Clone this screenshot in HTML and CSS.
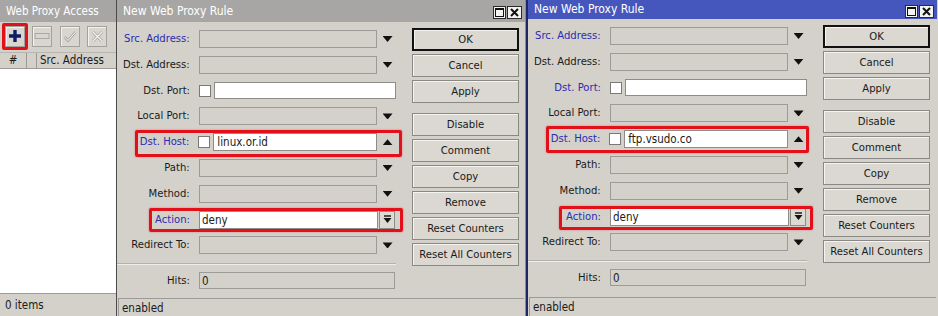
FILE: index.html
```html
<!DOCTYPE html>
<html lang="en">

<head>
    <meta charset="UTF-8">
    <meta name="viewport" content="width=device-width, initial-scale=1.0">
    <title>Web Proxy Rules</title>
    <link rel="stylesheet" href="styles.css">
</head>

<body>
    <div class="desktop">
        <!-- Web Proxy Access list -->
        <section class="list-win">
            <div class="titlebar inactive">Web Proxy Access</div>
            <div class="toolbar">
                <span class="tool mark">
                    <svg width="14" height="14" viewBox="0 0 14 14"><path d="M7 1V13M1 7H13" stroke="#0e1a66" stroke-width="3.4"/></svg>
                </span>
                <span class="tool">
                    <svg width="16" height="8" viewBox="0 0 16 8"><rect x="1" y="1.5" width="14" height="5" fill="none" stroke="#a9a7a2" stroke-width="1"/></svg>
                </span>
                <span class="tool">
                    <svg width="14" height="13" viewBox="0 0 14 13"><path d="M1.5 7L5 10.5L12.5 2" fill="none" stroke="#a9a7a2" stroke-width="2.6"/><path d="M1.5 7L5 10.5L12.5 2" fill="none" stroke="#f6f5f2" stroke-width="1"/></svg>
                </span>
                <span class="tool">
                    <svg width="13" height="13" viewBox="0 0 13 13"><path d="M2 2L11 11M11 2L2 11" stroke="#a9a7a2" stroke-width="3"/><path d="M2 2L11 11M11 2L2 11" stroke="#f6f5f2" stroke-width="1.2"/></svg>
                </span>
            </div>
            <div class="table-head">
                <span class="col-num">#</span>
                <span class="col-flag"></span>
                <span class="col-src">Src. Address</span>
            </div>
            <div class="table-body"></div>
            <div class="list-status">0 items</div>
        </section>

        <!-- first rule dialog (inactive) -->
        <section class="dialog">
            <div class="titlebar inactive">
                <span>New Web Proxy Rule</span>
                <span class="win-btns"><span class="wbtn"><span class="max-box"></span></span><span class="wbtn close"><svg width="9" height="9" viewBox="0 0 9 9"><path d="M1 1L8 8M8 1L1 8" stroke="#111" stroke-width="2"/></svg></span></span>
            </div>
            <div class="dialog-body">
                <div class="form">
                    <div class="row"><label class="lbl blue">Src. Address:</label><span class="field combo"></span><span class="slot"><i class="down"></i></span></div>
                    <div class="row"><label class="lbl">Dst. Address:</label><span class="field combo"></span><span class="slot"><i class="down"></i></span></div>
                    <div class="row"><label class="lbl">Dst. Port:</label><span class="check"></span><span class="field white wide"></span></div>
                    <div class="row"><label class="lbl">Local Port:</label><span class="field combo"></span><span class="slot"><i class="down"></i></span></div>
                    <div class="row mark-host"><label class="lbl blue">Dst. Host:</label><span class="check"></span><span class="field white host">linux.or.id</span><span class="slot"><i class="up"></i></span></div>
                    <div class="row"><label class="lbl">Path:</label><span class="field combo"></span><span class="slot"><i class="down"></i></span></div>
                    <div class="row"><label class="lbl">Method:</label><span class="field combo"></span><span class="slot"><i class="down"></i></span></div>
                    <div class="row mark-action"><label class="lbl blue">Action:</label><span class="field white combo">deny</span><span class="drop-btn"><svg width="9" height="9" viewBox="0 0 9 9"><path d="M1 1H8" stroke="#111" stroke-width="1.4"/><path d="M0.5 3H8.5L4.5 8z" fill="#111"/></svg></span></div>
                    <div class="row"><label class="lbl">Redirect To:</label><span class="field combo"></span><span class="slot"><i class="down"></i></span></div>
                    <div class="sep"></div>
                    <div class="row hits"><label class="lbl">Hits:</label><span class="field full">0</span></div>
                </div>
                <div class="actions">
                    <button class="btn default">OK</button>
                    <button class="btn">Cancel</button>
                    <button class="btn">Apply</button>
                    <button class="btn spaced">Disable</button>
                    <button class="btn">Comment</button>
                    <button class="btn">Copy</button>
                    <button class="btn">Remove</button>
                    <button class="btn">Reset Counters</button>
                    <button class="btn">Reset All Counters</button>
                </div>
            </div>
            <div class="status">enabled</div>
        </section>

        <!-- second rule dialog (active) -->
        <section class="dialog active">
            <div class="titlebar">
                <span>New Web Proxy Rule</span>
                <span class="win-btns"><span class="wbtn"><span class="max-box"></span></span><span class="wbtn close"><svg width="9" height="9" viewBox="0 0 9 9"><path d="M1 1L8 8M8 1L1 8" stroke="#111" stroke-width="2"/></svg></span></span>
            </div>
            <div class="dialog-body">
                <div class="form">
                    <div class="row"><label class="lbl blue">Src. Address:</label><span class="field combo"></span><span class="slot"><i class="down"></i></span></div>
                    <div class="row"><label class="lbl">Dst. Address:</label><span class="field combo"></span><span class="slot"><i class="down"></i></span></div>
                    <div class="row"><label class="lbl blue">Dst. Port:</label><span class="check"></span><span class="field white wide"></span></div>
                    <div class="row"><label class="lbl">Local Port:</label><span class="field combo"></span><span class="slot"><i class="down"></i></span></div>
                    <div class="row mark-host"><label class="lbl blue">Dst. Host:</label><span class="check"></span><span class="field white host">ftp.vsudo.co</span><span class="slot"><i class="up"></i></span></div>
                    <div class="row"><label class="lbl">Path:</label><span class="field combo"></span><span class="slot"><i class="down"></i></span></div>
                    <div class="row"><label class="lbl">Method:</label><span class="field combo"></span><span class="slot"><i class="down"></i></span></div>
                    <div class="row mark-action"><label class="lbl blue">Action:</label><span class="field white combo">deny</span><span class="drop-btn"><svg width="9" height="9" viewBox="0 0 9 9"><path d="M1 1H8" stroke="#111" stroke-width="1.4"/><path d="M0.5 3H8.5L4.5 8z" fill="#111"/></svg></span></div>
                    <div class="row"><label class="lbl">Redirect To:</label><span class="field combo"></span><span class="slot"><i class="down"></i></span></div>
                    <div class="sep"></div>
                    <div class="row hits"><label class="lbl">Hits:</label><span class="field full">0</span></div>
                </div>
                <div class="actions">
                    <button class="btn default">OK</button>
                    <button class="btn">Cancel</button>
                    <button class="btn">Apply</button>
                    <button class="btn spaced">Disable</button>
                    <button class="btn">Comment</button>
                    <button class="btn">Copy</button>
                    <button class="btn">Remove</button>
                    <button class="btn">Reset Counters</button>
                    <button class="btn">Reset All Counters</button>
                </div>
            </div>
            <div class="status">enabled</div>
        </section>
    </div>
</body>

</html>
```

FILE: styles.css
```css
body {
    margin: 0;
    font-family: 'DejaVu Sans Condensed', 'DejaVu Sans', sans-serif;
    font-size: 11px;
    color: #1a1a1a;
    background-color: #d4d1cb;
}

.desktop {
    display: flex;
    width: 938px;
    height: 316px;
    overflow: hidden;
}

/* Title bars */
.titlebar {
    display: flex;
    justify-content: space-between;
    height: 22px;
    line-height: 22px;
    padding-left: 6px;
    color: #ffffff;
    font-size: 12px;
    background-color: #4557bd;
}

.titlebar.inactive {
    background-color: #a7a6a4;
}

.list-win .titlebar {
    font-size: 11.5px;
}

.win-btns {
    display: flex;
    gap: 1px;
    margin-top: 6px;
    margin-right: 3px;
}

.wbtn {
    display: flex;
    justify-content: center;
    align-items: center;
    box-sizing: border-box;
    width: 13px;
    height: 13px;
    border: 1px solid #2a2a2a;
    background-color: #f4f3f0;
}

.wbtn.close {
    width: 15px;
}

.max-box {
    width: 9px;
    height: 9px;
    box-sizing: border-box;
    border: 1px solid #111;
    border-top-width: 2px;
}

/* Left list window */
.list-win {
    display: flex;
    flex-direction: column;
    width: 116px;
    border-right: 1px solid #4a4a4a;
}

.toolbar {
    display: flex;
    align-items: center;
    gap: 7px;
    height: 28px;
    padding-left: 5px;
}

.tool {
    position: relative;
    display: flex;
    justify-content: center;
    align-items: center;
    box-sizing: border-box;
    width: 20px;
    height: 21px;
    border: 1px solid #a3a19c;
    box-shadow: inset 1px 1px #f4f3f0;
    background-color: #d9d6d0;
}

.tool:nth-child(3) {
    margin-left: 1px;
}

.tool.mark::after {
    content: '';
    position: absolute;
    left: -4px;
    top: -4px;
    width: 20px;
    height: 21px;
    border: 3px solid #e3101a;
    border-radius: 2px;
}

.table-head {
    display: flex;
    height: 15px;
    line-height: 15px;
    margin-top: 2px;
    border-top: 1px solid #b8b6b1;
    border-bottom: 1px solid #9c9a96;
    font-size: 11.5px;
}

.col-num {
    width: 26px;
    text-align: center;
    border-right: 1px solid #9c9a96;
}

.col-flag {
    width: 9px;
    border-right: 1px solid #9c9a96;
}

.col-src {
    padding-left: 3px;
    white-space: nowrap;
}

.table-body {
    flex: 1;
    background-color: #ffffff;
}

.list-status {
    height: 22px;
    line-height: 22px;
    padding-left: 5px;
    border-top: 1px solid #9c9a96;
    font-size: 11.5px;
}

/* Rule dialogs */
.dialog {
    display: flex;
    flex-direction: column;
    width: 408px;
    border-right: 1px solid #8d8c89;
}

.dialog.active {
    width: 409px;
    border-left: 2px solid #1d2766;
    border-right: none;
}

.dialog.active .titlebar {
    height: 19px;
    line-height: 19px;
}

.dialog.active .win-btns {
    margin-top: 5px;
}

.dialog-body {
    display: flex;
    flex: 1;
}

.form {
    width: 279px;
    padding-top: 8px;
}

.row {
    position: relative;
    display: flex;
    height: 25.8px;
}

.lbl {
    width: 73px;
    margin-right: 9px;
    line-height: 18px;
    font-size: 11.2px;
    text-align: right;
    white-space: nowrap;
}

.lbl.blue {
    color: #2b2bb2;
}

.field {
    box-sizing: border-box;
    height: 18px;
    line-height: 16px;
    padding-left: 2px;
    font-size: 11.5px;
    border: 1px solid #9d9b97;
    background-color: #d4d1cb;
}

.field.white {
    border-color: #8e8c88;
    background-color: #ffffff;
}

.combo {
    width: 179px;
}

.wide {
    width: 182px;
    height: 17px;
}

.host {
    width: 165px;
    padding-left: 3px;
}

.full {
    width: 196px;
    height: 17px;
}

.check {
    box-sizing: border-box;
    width: 12px;
    height: 12px;
    margin-top: 3px;
    margin-right: 3px;
    border: 1px solid #7a7975;
    background-color: #ffffff;
}

.slot {
    display: flex;
    justify-content: center;
    width: 17px;
    padding-left: 2px;
}

.down,
.up {
    width: 10px;
    height: 6px;
    margin-top: 6px;
    background-color: #111;
    clip-path: polygon(0 0, 100% 0, 50% 100%);
}

.up {
    clip-path: polygon(50% 0, 100% 100%, 0 100%);
}

.drop-btn {
    display: flex;
    justify-content: center;
    align-items: center;
    box-sizing: border-box;
    width: 16px;
    height: 18px;
    margin-left: 1px;
    border: 1px solid #8e8c88;
    background-color: #dddad4;
}

.mark-host::after,
.mark-action::after {
    content: '';
    position: absolute;
    border: 3px solid #e3101a;
    border-radius: 2px;
    box-shadow: 0 0 2px rgba(227, 16, 26, 0.5);
}

.mark-host::after {
    left: 18px;
    top: -3px;
    width: 261px;
    height: 21px;
}

.mark-action::after {
    left: 32px;
    top: -3px;
    width: 248px;
    height: 18px;
}

.dialog.active .mark-host::after {
    top: -4px;
    width: 257px;
}

.dialog.active .mark-action::after {
    left: 31px;
    top: -2px;
}

.sep {
    height: 0;
    margin: 1px 0 7px;
    border-top: 1px solid #b3b1ac;
    border-bottom: 1px solid #eeede9;
}

.hits .lbl {
    line-height: 17px;
}

.actions {
    display: flex;
    flex-direction: column;
    gap: 3px;
    width: 107px;
    margin-left: 16px;
    padding-top: 6px;
}

.btn {
    box-sizing: border-box;
    height: 23px;
    padding: 0;
    font-family: inherit;
    font-size: 11.2px;
    color: #1a1a1a;
    border: 1px solid #8a8884;
    box-shadow: inset 1px 1px #f5f4f1;
    background-color: #dbd8d2;
    white-space: nowrap;
}

.btn.default {
    border: 2px solid #111;
}

.btn.spaced {
    margin-top: 7px;
}

.status {
    box-sizing: border-box;
    height: 19px;
    line-height: 18px;
    margin: 0 1px;
    padding-left: 3px;
    border-top: 1px solid #9d9b97;
    border-left: 1px solid #9d9b97;
    font-size: 11.5px;
}
```
